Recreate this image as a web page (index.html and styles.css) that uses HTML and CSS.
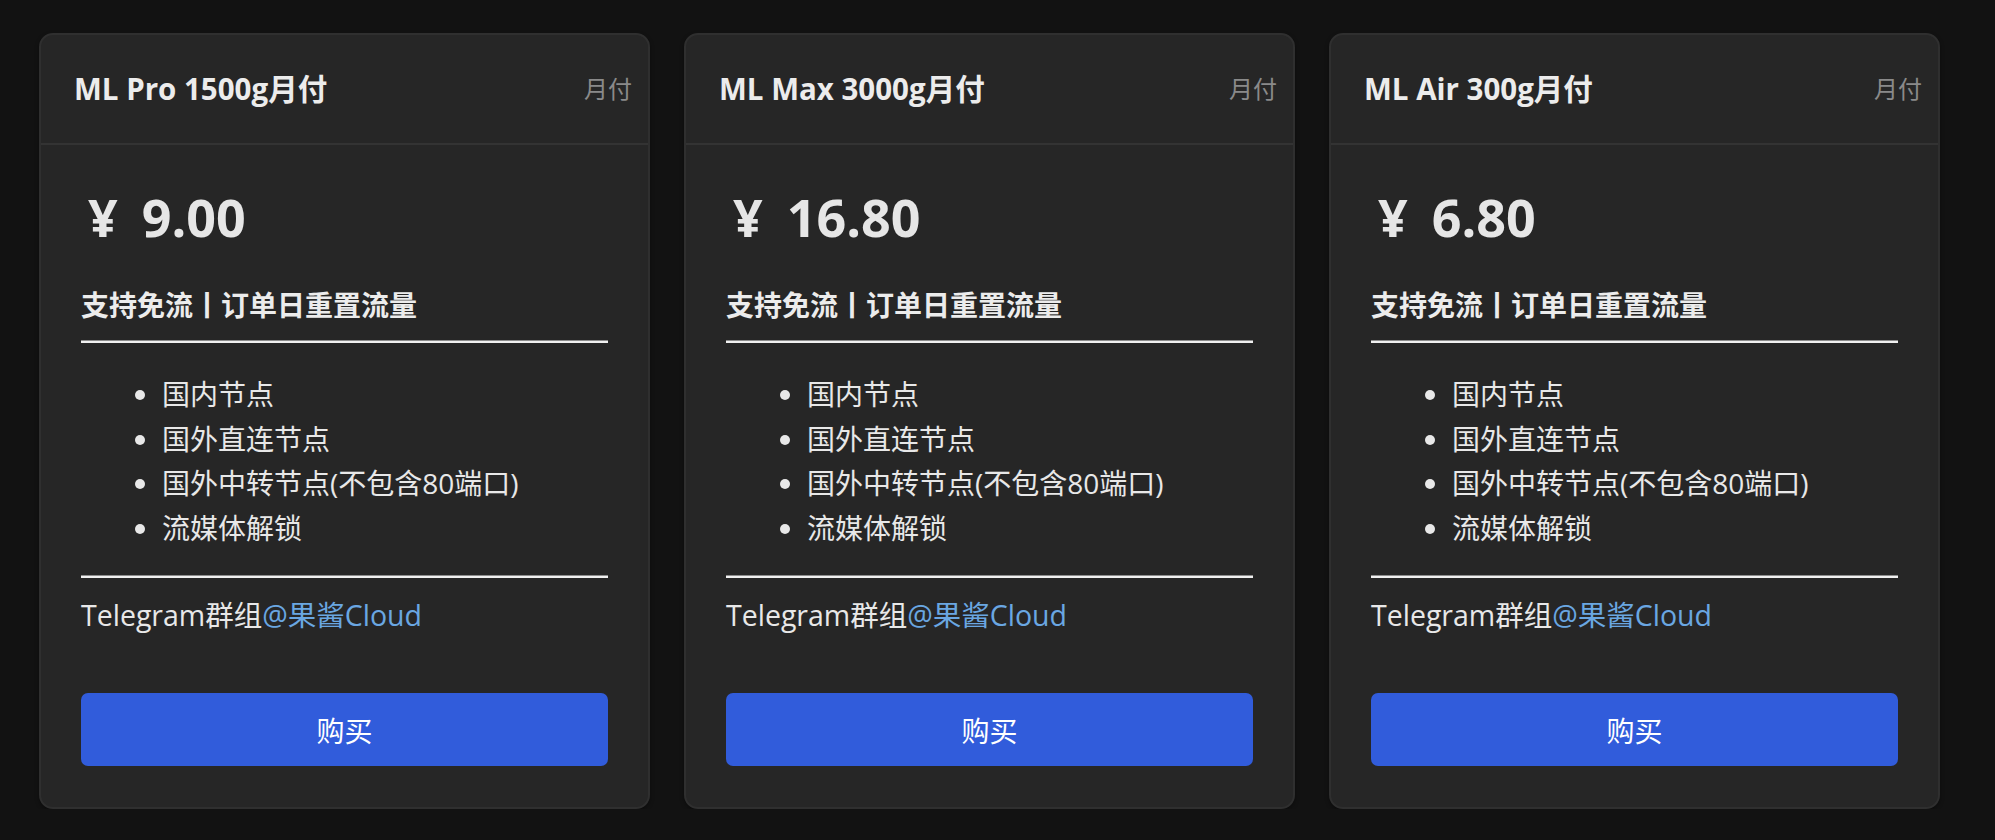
FILE: index.html
```html
<!DOCTYPE html>
<html lang="zh-CN">
<head>
<meta charset="utf-8">
<title>套餐</title>
<link rel="stylesheet" href="styles.css">
</head>
<body>
<main class="plans">
  <section class="card">
    <header class="card-head">
      <h3 class="card-title">ML Pro 1500g月付</h3>
      <span class="card-period">月付</span>
    </header>
    <div class="card-body">
      <div class="price"><span class="yen">¥</span>9.00</div>
      <p class="subtitle">支持免流丨订单日重置流量</p>
      <hr class="rule">
      <ul class="features">
        <li>国内节点</li>
        <li>国外直连节点</li>
        <li>国外中转节点(不包含80端口)</li>
        <li>流媒体解锁</li>
      </ul>
      <hr class="rule">
      <p class="group">Telegram群组<a class="link" href="#">@果酱Cloud</a></p>
      <button class="buy" type="button">购买</button>
    </div>
  </section>
  <section class="card">
    <header class="card-head">
      <h3 class="card-title">ML Max 3000g月付</h3>
      <span class="card-period">月付</span>
    </header>
    <div class="card-body">
      <div class="price"><span class="yen">¥</span>16.80</div>
      <p class="subtitle">支持免流丨订单日重置流量</p>
      <hr class="rule">
      <ul class="features">
        <li>国内节点</li>
        <li>国外直连节点</li>
        <li>国外中转节点(不包含80端口)</li>
        <li>流媒体解锁</li>
      </ul>
      <hr class="rule">
      <p class="group">Telegram群组<a class="link" href="#">@果酱Cloud</a></p>
      <button class="buy" type="button">购买</button>
    </div>
  </section>
  <section class="card">
    <header class="card-head">
      <h3 class="card-title">ML Air 300g月付</h3>
      <span class="card-period">月付</span>
    </header>
    <div class="card-body">
      <div class="price"><span class="yen">¥</span>6.80</div>
      <p class="subtitle">支持免流丨订单日重置流量</p>
      <hr class="rule">
      <ul class="features">
        <li>国内节点</li>
        <li>国外直连节点</li>
        <li>国外中转节点(不包含80端口)</li>
        <li>流媒体解锁</li>
      </ul>
      <hr class="rule">
      <p class="group">Telegram群组<a class="link" href="#">@果酱Cloud</a></p>
      <button class="buy" type="button">购买</button>
    </div>
  </section>
</main>
</body>
</html>
```

FILE: styles.css
```css
* { box-sizing: border-box; }

html, body {
  margin: 0;
  background: #121212;
}

body {
  font-family: "Open Sans", "Noto Sans CJK SC", sans-serif;
  color: #e6e6e6;
  font-size: 28px;
}

.plans {
  display: grid;
  grid-template-columns: repeat(3, 611px);
  column-gap: 34px;
  padding: 33px 0 0 39px;
  align-items: start;
}

.card {
  background: #262626;
  border: 2px solid #2f2f2f;
  border-radius: 14px;
  box-shadow: 0 2px 4px rgba(0, 0, 0, 0.35);
  overflow: hidden;
}

.card-head {
  display: flex;
  align-items: center;
  justify-content: space-between;
  height: 110px;
  padding: 0 16px 0 33px;
  border-bottom: 2px solid #333333;
}

.card-title {
  margin: 0;
  font-size: 29.5px;
  font-weight: 700;
  color: #ececec;
  line-height: 1.2;
}

.card-period {
  font-size: 24px;
  color: #8a8a8a;
  line-height: 1.2;
}

.card-body {
  padding: 0 40px 41px;
  display: flex;
  flex-direction: column;
}

.price {
  margin: 45px 0 0;
  padding-left: 7px;
  font-size: 52px;
  font-weight: 700;
  line-height: 54px;
  color: #e6e6e6;
}

.yen {
  margin-right: 24px;
}

.subtitle {
  margin: 41px 0 0;
  font-size: 28px;
  font-weight: 700;
  line-height: 40px;
  color: #ececec;
}

.rule {
  width: 100%;
  margin: 15px 0 0;
  height: 0;
  border: 0;
  border-top: 1px solid #8c8c8c;
  border-bottom: 2px solid #f0f0f0;
}

.features {
  margin: 29px 0 0;
  padding: 0 0 0 81px;
  line-height: 44.5px;
  color: #e8e8e8;
}

.features + .rule {
  margin-top: 25px;
}

.group {
  margin: 15px 0 0;
  line-height: 44px;
  font-size: 28.5px;
  color: #e8e8e8;
}

.link {
  color: #6aa7e2;
  text-decoration: none;
}

.buy {
  margin-top: 56px;
  height: 73px;
  width: 100%;
  border: 0;
  border-radius: 7px;
  background: #315cdb;
  color: #ffffff;
  font-family: "Open Sans", "Noto Sans CJK SC", sans-serif;
  font-size: 28px;
  cursor: pointer;
}
```
